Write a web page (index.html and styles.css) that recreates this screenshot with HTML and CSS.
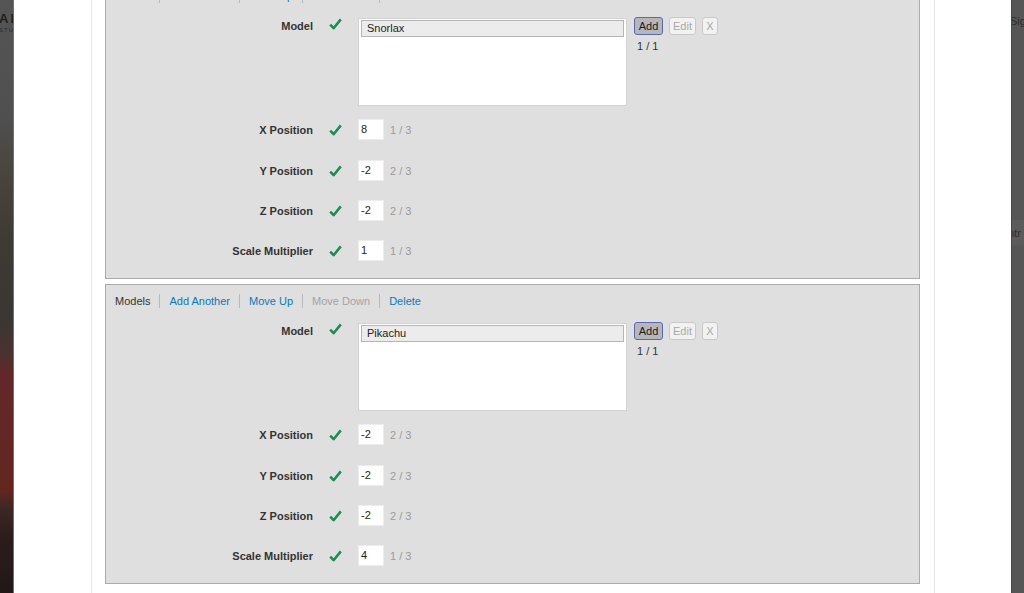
FILE: index.html
```html
<!DOCTYPE html>
<html>
<head>
<meta charset="utf-8">
<link rel="stylesheet" href="styles.css">
</head>
<body>
<div class="screen">
  <div class="strip strip-left"><span class="strip-brand">AF</span><span class="strip-sub">STU</span></div>
  <div class="modal">
    <div class="container">
      <div class="scroller">

        <section class="panel">
          <div class="panel-head">
            <span class="ph-title">Models</span>
            <a class="ph-link">Add Another</a>
            <a class="ph-link">Move Up</a>
            <span class="ph-disabled">Move Down</span>
            <a class="ph-link">Delete</a>
          </div>
          <div class="row row-model">
            <label class="lbl">Model</label>
            <span class="chk"><svg width="13" height="12" viewBox="0 0 13 12"><path d="M1.2 6.6 L4.6 10.2 L11.8 1.4" fill="none" stroke="#1f8c55" stroke-width="2.6" stroke-linejoin="round"/></svg></span>
            <div class="listbox"><div class="list-item">Snorlax</div></div>
            <div class="side">
              <div class="btns">
                <button class="btn btn-add">Add</button>
                <button class="btn btn-off">Edit</button>
                <button class="btn btn-off btn-x">X</button>
              </div>
              <div class="side-count">1 / 1</div>
            </div>
          </div>
          <div class="row row-first">
            <label class="lbl">X Position</label>
            <span class="chk"><svg width="13" height="12" viewBox="0 0 13 12"><path d="M1.2 6.6 L4.6 10.2 L11.8 1.4" fill="none" stroke="#1f8c55" stroke-width="2.6" stroke-linejoin="round"/></svg></span>
            <div class="num">8</div><span class="cnt">1 / 3</span>
          </div>
          <div class="row row-wide">
            <label class="lbl">Y Position</label>
            <span class="chk"><svg width="13" height="12" viewBox="0 0 13 12"><path d="M1.2 6.6 L4.6 10.2 L11.8 1.4" fill="none" stroke="#1f8c55" stroke-width="2.6" stroke-linejoin="round"/></svg></span>
            <div class="num">-2</div><span class="cnt">2 / 3</span>
          </div>
          <div class="row">
            <label class="lbl">Z Position</label>
            <span class="chk"><svg width="13" height="12" viewBox="0 0 13 12"><path d="M1.2 6.6 L4.6 10.2 L11.8 1.4" fill="none" stroke="#1f8c55" stroke-width="2.6" stroke-linejoin="round"/></svg></span>
            <div class="num">-2</div><span class="cnt">2 / 3</span>
          </div>
          <div class="row">
            <label class="lbl">Scale Multiplier</label>
            <span class="chk"><svg width="13" height="12" viewBox="0 0 13 12"><path d="M1.2 6.6 L4.6 10.2 L11.8 1.4" fill="none" stroke="#1f8c55" stroke-width="2.6" stroke-linejoin="round"/></svg></span>
            <div class="num">1</div><span class="cnt">1 / 3</span>
          </div>
        </section>

        <section class="panel">
          <div class="panel-head">
            <span class="ph-title">Models</span>
            <a class="ph-link">Add Another</a>
            <a class="ph-link">Move Up</a>
            <span class="ph-disabled">Move Down</span>
            <a class="ph-link">Delete</a>
          </div>
          <div class="row row-model">
            <label class="lbl">Model</label>
            <span class="chk"><svg width="13" height="12" viewBox="0 0 13 12"><path d="M1.2 6.6 L4.6 10.2 L11.8 1.4" fill="none" stroke="#1f8c55" stroke-width="2.6" stroke-linejoin="round"/></svg></span>
            <div class="listbox"><div class="list-item">Pikachu</div></div>
            <div class="side">
              <div class="btns">
                <button class="btn btn-add">Add</button>
                <button class="btn btn-off">Edit</button>
                <button class="btn btn-off btn-x">X</button>
              </div>
              <div class="side-count">1 / 1</div>
            </div>
          </div>
          <div class="row row-first">
            <label class="lbl">X Position</label>
            <span class="chk"><svg width="13" height="12" viewBox="0 0 13 12"><path d="M1.2 6.6 L4.6 10.2 L11.8 1.4" fill="none" stroke="#1f8c55" stroke-width="2.6" stroke-linejoin="round"/></svg></span>
            <div class="num">-2</div><span class="cnt">2 / 3</span>
          </div>
          <div class="row row-wide">
            <label class="lbl">Y Position</label>
            <span class="chk"><svg width="13" height="12" viewBox="0 0 13 12"><path d="M1.2 6.6 L4.6 10.2 L11.8 1.4" fill="none" stroke="#1f8c55" stroke-width="2.6" stroke-linejoin="round"/></svg></span>
            <div class="num">-2</div><span class="cnt">2 / 3</span>
          </div>
          <div class="row">
            <label class="lbl">Z Position</label>
            <span class="chk"><svg width="13" height="12" viewBox="0 0 13 12"><path d="M1.2 6.6 L4.6 10.2 L11.8 1.4" fill="none" stroke="#1f8c55" stroke-width="2.6" stroke-linejoin="round"/></svg></span>
            <div class="num">-2</div><span class="cnt">2 / 3</span>
          </div>
          <div class="row">
            <label class="lbl">Scale Multiplier</label>
            <span class="chk"><svg width="13" height="12" viewBox="0 0 13 12"><path d="M1.2 6.6 L4.6 10.2 L11.8 1.4" fill="none" stroke="#1f8c55" stroke-width="2.6" stroke-linejoin="round"/></svg></span>
            <div class="num">4</div><span class="cnt">1 / 3</span>
          </div>
        </section>

      </div>
    </div>
  </div>
  <div class="strip strip-right"><span class="sr-top">Sig</span><span class="sr-band">ntr</span></div>
</div>
</body>
</html>
```

FILE: styles.css
```css
html, body {
  margin: 0;
  padding: 0;
  height: 100%;
  overflow: hidden;
  font-family: "Liberation Sans", Arial, sans-serif;
  font-size: 11px;
  color: #333;
}

.screen {
  display: flex;
  height: 593px;
  width: 1024px;
  overflow: hidden;
}

.strip {
  flex: none;
  box-sizing: border-box;
  overflow: hidden;
  display: flex;
  flex-direction: column;
  white-space: nowrap;
}

.strip-left {
  width: 14px;
  background: linear-gradient(to bottom,
    #555555 0px, #4f4f4f 120px, #4a453e 170px, #3e3a34 240px,
    #3a3633 320px, #4a3230 355px, #62282a 372px, #63261f 490px,
    #3c2624 510px, #2b1c1c 540px, #221818 593px);
  border-right: 1px solid #707070;
}

.strip-brand {
  margin-top: 12px;
  margin-left: -1px;
  font-weight: bold;
  font-size: 13px;
  letter-spacing: 2px;
  color: #1e1e1e;
  line-height: 14px;
}

.strip-sub {
  margin-left: -1px;
  font-size: 6px;
  letter-spacing: 1px;
  color: #2a2a2a;
  line-height: 8px;
}

.strip-right {
  width: 13px;
  background: #565656;
  border-left: 1px solid #474747;
}

.sr-top {
  margin-top: 14px;
  margin-left: -2px;
  font-size: 11px;
  color: #2c2c2c;
  line-height: 14px;
}

.sr-band {
  margin-top: 192px;
  margin-left: -4px;
  padding: 6px 0 5px;
  font-size: 11px;
  line-height: 14px;
  color: #2c2c2c;
  background: #5b5b5b;
}

.modal {
  flex: 1;
  background: #fff;
  padding-left: 77px;
  overflow: hidden;
}

.container {
  width: 815px;
  height: 640px;
  border-left: 1px solid #e6e6e6;
  border-right: 1px solid #e6e6e6;
  padding: 0 14px 0 13px;
  box-sizing: content-box;
  background: #fff;
}

.scroller {
  margin-top: -21px;
}

.panel {
  box-sizing: border-box;
  background: #dfdfdf;
  border: 1px solid #ababab;
  padding: 8px 9px 17px;
  margin-bottom: 5px;
}

.panel-head {
  display: flex;
  line-height: 14px;
  height: 14px;
  margin-top: 1px;
}

.ph-title {
  color: #333;
  padding-right: 9px;
}

.ph-link, .ph-disabled {
  border-left: 1px solid #b9b9b9;
  padding: 0 9px;
}

.ph-link {
  color: #0a78be;
  cursor: pointer;
}

.ph-disabled {
  color: #a3a3a3;
}

.row {
  display: flex;
  align-items: center;
  margin-top: 19px;
  height: 21px;
}

.row-wide {
  margin-top: 20px;
}

.row-model {
  align-items: flex-start;
  margin-top: 15px;
  height: auto;
}

.row-first {
  margin-top: 13px;
}

.lbl {
  width: 198px;
  text-align: right;
  font-weight: bold;
  color: #333;
  line-height: 14px;
  flex: none;
}

.row-model .lbl {
  margin-top: 1px;
}

.chk {
  width: 13px;
  height: 12px;
  margin-left: 16px;
  margin-right: 16px;
  flex: none;
  display: flex;
}

.listbox {
  box-sizing: border-box;
  width: 269px;
  height: 88px;
  background: #fff;
  border: 1px solid #d2d2d2;
  padding: 1px 2px;
  flex: none;
}

.list-item {
  height: 17px;
  box-sizing: border-box;
  background: #ececec;
  border: 1px solid #b5b5b5;
  padding-left: 5px;
  line-height: 15px;
  color: #222;
}

.side {
  margin-left: 7px;
  margin-top: -1px;
}

.btns {
  display: flex;
  gap: 6px;
}

.btn {
  box-sizing: border-box;
  height: 18px;
  font-family: "Liberation Sans", Arial, sans-serif;
  font-size: 11px;
  line-height: 14px;
  border-radius: 3px;
  padding: 0;
  margin: 0;
}

.btn-add {
  width: 29px;
  background: #b7b7bb;
  border: 1px solid #5a68b4;
  color: #1a1a1a;
}

.btn-off {
  width: 27px;
  background: #f2f2f2;
  border: 1px solid #c9c9c9;
  color: #a8a8a8;
}

.btn-x {
  width: 16px;
}

.side-count {
  margin-top: 4px;
  margin-left: 3px;
  line-height: 14px;
  color: #333;
}

.num {
  box-sizing: border-box;
  width: 26px;
  height: 21px;
  background: #fff;
  border: 1px solid #ececec;
  padding-left: 2px;
  line-height: 19px;
  color: #222;
  flex: none;
}

.cnt {
  margin-left: 6px;
  color: #9b9b9b;
}
```
